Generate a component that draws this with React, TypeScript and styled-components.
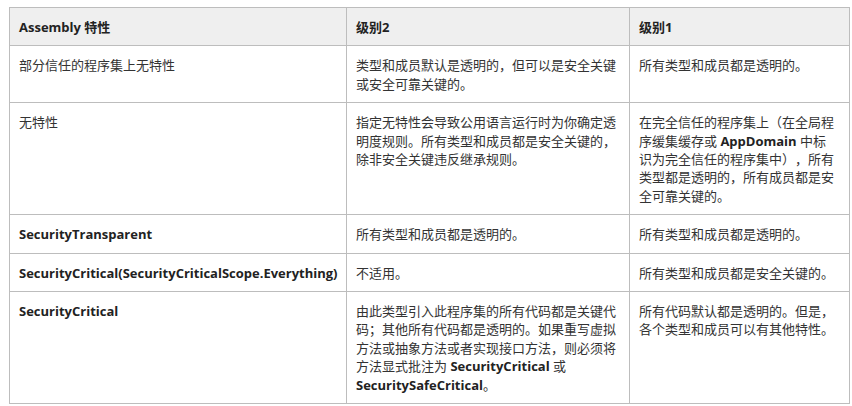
import styled, { createGlobalStyle } from 'styled-components';

const GlobalStyle = createGlobalStyle`
  html, body {
    margin: 0;
    padding: 0;
    background: #ffffff;
  }
  body {
    font-family: "Open Sans", "Noto Sans CJK SC", sans-serif;
    color: #2a2a2a;
  }
`;

const Page = styled.div`
  padding: 7px 0 0 9px;
`;

const Table = styled.table`
  border-collapse: collapse;
  table-layout: fixed;
  width: 840px;
  font-size: 13px;
  line-height: 18.4px;
  text-spacing-trim: space-all;
`;

const HeadCell = styled.th`
  background: #efefef;
  border: 1px solid #bdbdbd;
  padding: 10px 9px 9px;
  text-align: left;
  vertical-align: top;
  font-weight: 700;
  color: #222;
`;

const Cell = styled.td`
  border: 1px solid #bdbdbd;
  padding: 10px 9px 9px;
  vertical-align: top;
  color: #333;
  &:last-child { padding-right: 12px; }
`;

const Name = styled.strong`
  font-weight: 700;
  color: #222;
`;

interface Row {
  attr: string;
  bold?: boolean;
  level2: React.ReactNode;
  level1: React.ReactNode;
}

const rows: Row[] = [
  {
    attr: '部分信任的程序集上无特性',
    level2: '类型和成员默认是透明的，但可以是安全关键或安全可靠关键的。',
    level1: '所有类型和成员都是透明的。',
  },
  {
    attr: '无特性',
    level2: '指定无特性会导致公用语言运行时为你确定透明度规则。所有类型和成员都是安全关键的，除非安全关键违反继承规则。',
    level1: (
      <>在完全信任的程序集上（在全局程序缓集缓存或 <Name>AppDomain</Name> 中标识为完全信任的程序集中），所有类型都是透明的，所有成员都是安全可靠关键的。</>
    ),
  },
  {
    attr: 'SecurityTransparent',
    bold: true,
    level2: '所有类型和成员都是透明的。',
    level1: '所有类型和成员都是透明的。',
  },
  {
    attr: 'SecurityCritical(SecurityCriticalScope.Everything)',
    bold: true,
    level2: '不适用。',
    level1: '所有类型和成员都是安全关键的。',
  },
  {
    attr: 'SecurityCritical',
    bold: true,
    level2: (
      <>由此类型引入此程序集的所有代码都是关键代码；其他所有代码都是透明的。如果重写虚拟方法或抽象方法或者实现接口方法，则必须将方法显式批注为 <Name>SecurityCritical</Name> 或 <Name>SecuritySafeCritical</Name>。</>
    ),
    level1: '所有代码默认都是透明的。但是，各个类型和成员可以有其他特性。',
  },
];

export default function App() {
  return (
    <Page>
      <GlobalStyle />
      <Table>
        <colgroup>
          <col style={{ width: 337 }} />
          <col style={{ width: 283 }} />
          <col style={{ width: 220 }} />
        </colgroup>
        <thead>
          <tr>
            <HeadCell>Assembly 特性</HeadCell>
            <HeadCell>级别2</HeadCell>
            <HeadCell>级别1</HeadCell>
          </tr>
        </thead>
        <tbody>
          {rows.map((r) => (
            <tr key={r.attr}>
              <Cell>{r.bold ? <Name>{r.attr}</Name> : r.attr}</Cell>
              <Cell>{r.level2}</Cell>
              <Cell>{r.level1}</Cell>
            </tr>
          ))}
        </tbody>
      </Table>
    </Page>
  );
}
